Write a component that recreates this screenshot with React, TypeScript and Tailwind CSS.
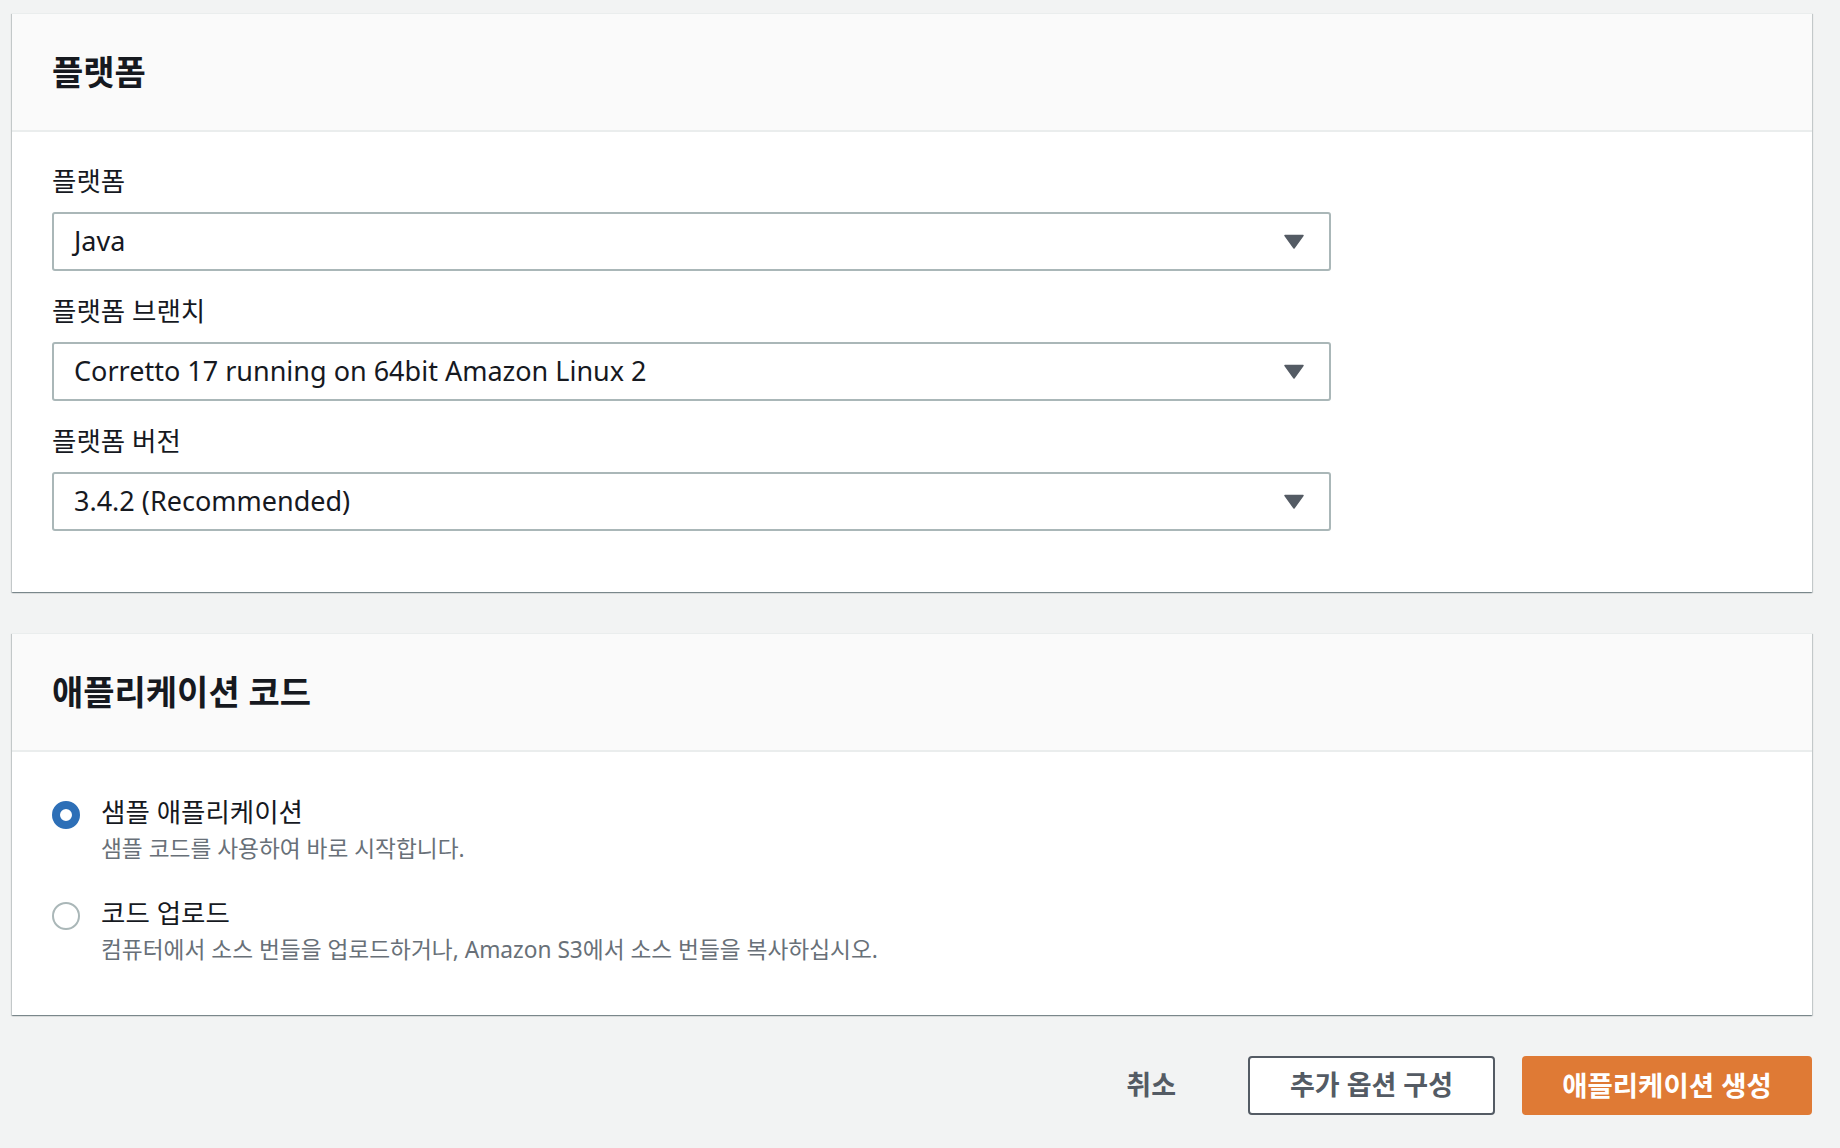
import React from "react";

const font = {
  fontFamily: '"Noto Sans", "Noto Sans CJK KR", sans-serif',
};

function Caret() {
  return (
    <svg width="20" height="15" viewBox="0 0 20 15" className="shrink-0">
      <path d="M1 1.5 H19 L10 14 Z" fill="#545b64" stroke="#545b64" strokeWidth="1.5" strokeLinejoin="round" />
    </svg>
  );
}

function SelectField({ label, value, first }: { label: string; value: string; first?: boolean }) {
  return (
    <div className={first ? "" : "mt-[22px]"}>
      <div className="text-[26.5px] leading-[36px] text-[#16191f] mb-[13px]">{label}</div>
      <div className="w-[1279px] h-[59px] border-2 border-[#aab7b8] rounded-[3px] bg-white flex items-center justify-between pl-[20px] pr-[25px]">
        <span className="text-[27px] text-[#16191f]">{value}</span>
        <Caret />
      </div>
    </div>
  );
}

function Card({ title, children }: { title: string; children: React.ReactNode }) {
  return (
    <section className="bg-white border-t border-[#eaeded] shadow-[0_1px_1px_0_rgba(0,28,36,0.3),1px_1px_1px_0_rgba(0,28,36,0.15),-1px_1px_1px_0_rgba(0,28,36,0.15)]">
      <header className="h-[118px] bg-[#fafafa] border-b-2 border-[#eaeded] flex items-center px-[40px]">
        <h2 className="text-[34px] font-bold text-[#16191f] leading-none">{title}</h2>
      </header>
      {children}
    </section>
  );
}

function Radio({ checked, label, desc, first }: { checked?: boolean; label: string; desc: string; first?: boolean }) {
  return (
    <div className={"flex items-start " + (first ? "" : "mt-[28px]")}>
      <div
        className={
          "mt-[7px] w-[28px] h-[28px] rounded-full bg-white shrink-0 " +
          (checked ? "border-[8px] border-[#2d6fb7]" : "border-2 border-[#aab7b8]")
        }
      />
      <div className="ml-[21px]">
        <div className="text-[26.5px] leading-[36px] text-[#16191f]">{label}</div>
        <div className="mt-[1px] text-[22.7px] leading-[36px] text-[#687078]">{desc}</div>
      </div>
    </div>
  );
}

export default function App() {
  return (
    <div className="min-h-screen w-full bg-[#f2f3f3]" style={font}>
      <div className="pl-[12px] pr-[28px] pt-[13px] pb-[30px]">
        <Card title="플랫폼">
          <div className="px-[40px] pt-[31px] pb-[61px]">
            <SelectField first label="플랫폼" value="Java" />
            <SelectField label="플랫폼 브랜치" value="Corretto 17 running on 64bit Amazon Linux 2" />
            <SelectField label="플랫폼 버전" value="3.4.2 (Recommended)" />
          </div>
        </Card>

        <div className="mt-[41px]">
          <Card title="애플리케이션 코드">
            <div className="px-[40px] pt-[42px] pb-[47px]">
              <Radio first checked label="샘플 애플리케이션" desc="샘플 코드를 사용하여 바로 시작합니다." />
              <Radio
                label="코드 업로드"
                desc="컴퓨터에서 소스 번들을 업로드하거나, Amazon S3에서 소스 번들을 복사하십시오."
              />
            </div>
          </Card>
        </div>

        <div className="mt-[41px] flex justify-end items-center">
          <button className="h-[59px] px-[10px] mr-[62px] text-[27px] font-bold text-[#545b64]">
            취소
          </button>
          <button className="h-[59px] w-[247px] border-2 border-[#545b64] rounded-[4px] bg-white text-[27px] font-bold text-[#545b64]">
            추가 옵션 구성
          </button>
          <button className="ml-[27px] h-[59px] w-[290px] rounded-[4px] bg-[#df7a35] text-[27.5px] font-bold text-white">
            애플리케이션 생성
          </button>
        </div>
      </div>
    </div>
  );
}
